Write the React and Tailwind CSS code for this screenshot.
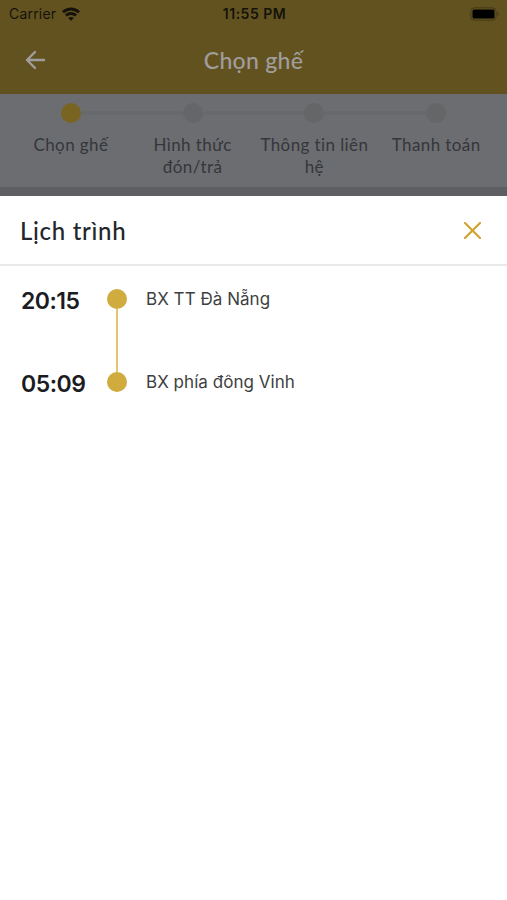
import React from 'react';

const steps = [
  { label: 'Chọn ghế', active: true },
  { label: 'Hình thức đón/trả' },
  { label: 'Thông tin liên hệ' },
  { label: 'Thanh toán' },
];

const stops = [
  { time: '20:15', name: 'BX TT Đà Nẵng' },
  { time: '05:09', name: 'BX phía đông Vinh' },
];

function StatusBar() {
  return (
    <div className="flex h-[27px] items-center justify-between pl-[9px] pr-[7px] font-['Inter',sans-serif] text-[#15120a]">
      <div className="flex w-24 items-center gap-[6px]">
        <span className="text-[14px] tracking-[0.2px]">Carrier</span>
        <svg width="18" height="14" viewBox="0 0 18 14" fill="none" stroke="currentColor" strokeWidth="2.8">
          <path d="M1 5.2C5.6 .9 12.4 .9 17 5.2" />
          <path d="M3.9 8.5c2.9-2.7 7.3-2.7 10.2 0" />
          <path d="M9 13.8 6.2 11c1.6-1.4 4-1.4 5.6 0z" fill="currentColor" stroke="none" />
        </svg>
      </div>
      <span className="text-[14px] font-semibold tracking-[0.5px]">11:55 PM</span>
      <div className="flex w-24 justify-end">
        <svg width="30" height="14" viewBox="0 0 30 14">
          <rect x=".8" y=".8" width="25.4" height="12.4" rx="3.8" fill="none" stroke="#463a16" />
          <rect x="2.5" y="2.5" width="22" height="9" rx="1.5" fill="#000" />
          <path d="M27.6 5v4c1.8-.6 1.8-3.4 0-4z" fill="#463a16" />
        </svg>
      </div>
    </div>
  );
}

function Header() {
  return (
    <div className="h-[94px] bg-[#625220]">
      <StatusBar />
      <div className="flex h-[66px] items-center px-[25px] text-[#a09e9d]">
        <button className="w-10" aria-label="Back">
          <svg width="21" height="20" viewBox="0 0 21 20" fill="none" stroke="currentColor" strokeWidth="2.4" strokeLinecap="round" strokeLinejoin="round">
            <path d="M19 10H2M10 2 2 10l8 8" />
          </svg>
        </button>
        <h1 className="flex-1 text-center text-[23px] font-medium leading-7 tracking-[0.3px]">Chọn ghế</h1>
        <div className="w-10" />
      </div>
    </div>
  );
}

function Stepper() {
  return (
    <div className="flex h-[93px] bg-[#6c6d71] px-[10px] pt-[9px]">
      {steps.map((step, i) => (
        <div key={step.label} className="flex flex-1 flex-col items-center">
          <div className="flex w-full items-center">
            <div className={i === 0 ? 'h-1 flex-1' : 'h-1 flex-1 bg-[#68696c]'} />
            <div className={step.active ? 'size-5 rounded-full bg-[#7a6421]' : 'size-5 rounded-full bg-[#656667]'} />
            <div className={i === steps.length - 1 ? 'h-1 flex-1' : 'h-1 flex-1 bg-[#68696c]'} />
          </div>
          <span className="mt-[11px] w-[114px] text-center text-[17px] leading-[22px] tracking-[0.4px] text-[#35363a]">
            {step.label}
          </span>
        </div>
      ))}
    </div>
  );
}

function Schedule() {
  return (
    <div className="flex flex-1 flex-col bg-white">
      <div className="flex h-[70px] items-center justify-between border-b-2 border-[#e9e9e9] pl-[20px] pr-[26px]">
        <h2 className="pt-[2px] text-[24px] font-medium leading-8 tracking-[0.7px] text-[#24272b]">Lịch trình</h2>
        <button aria-label="Close">
          <svg width="17" height="17" viewBox="0 0 17 17" fill="none" stroke="#d0a535" strokeWidth="2.3" strokeLinecap="round">
            <path d="m1 1 15 15M16 1 1 16" />
          </svg>
        </button>
      </div>
      <div className="px-[20px] pt-[23px]">
        {stops.map((stop, i) => (
          <div key={stop.time} className="flex h-[83px]">
            <span className="w-[87px] pl-px font-['Inter',sans-serif] text-[23px] font-semibold leading-[25px] tracking-[-0.5px] text-[#1b1c1f]">{stop.time}</span>
            <div className="flex w-5 flex-col items-center">
              <div className="size-5 shrink-0 rounded-full bg-[#d0ab3e]" />
              {i < stops.length - 1 && <div className="w-[2px] flex-1 bg-[#e3c470]" />}
            </div>
            <span className="ml-[19px] font-['Inter',sans-serif] text-[17px] leading-[21px] tracking-[0.04px] text-[#3e3f42]">{stop.name}</span>
          </div>
        ))}
      </div>
    </div>
  );
}

export default function App() {
  return (
    <div className="flex h-screen w-full flex-col overflow-hidden font-['Lato','Open_Sans',sans-serif]">
      <Header />
      <Stepper />
      <div className="h-[9px] bg-[#5e5f62]" />
      <Schedule />
    </div>
  );
}
